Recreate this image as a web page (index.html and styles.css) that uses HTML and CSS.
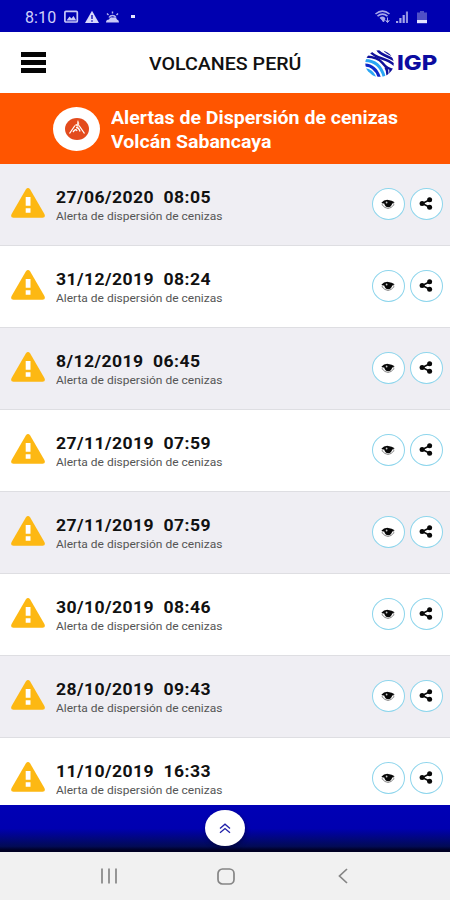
FILE: index.html
```html
<!DOCTYPE html>
<html lang="es">
<head>
<meta charset="utf-8">
<title>Volcanes Perú</title>
<link rel="stylesheet" href="styles.css">
</head>
<body>
<svg class="defs" width="0" height="0">
  <symbol id="warn" viewBox="0 0 34 30"><path d="M14.8 1.4Q17-1.2 19.2 1.4L33.4 26Q35 29.6 31.5 29.8H2.500Q-1 29.6.6 26Z" fill="#fdb813"/><path d="M14.700 9h4.800v8.800h-4.800zM14.700 20.200h4.800v4.600h-4.800z" fill="#fff"/></symbol>
  <symbol id="eye" viewBox="0 0 14 12"><path d="M.8 6.500Q7-.8 13.200 6.500Q7 14.400.8 6.500Z" fill="#fff" stroke="#777" stroke-width=".9"/><path d="M.3 4.800Q3 1.600 7 1.900T13.700 4.300L11.200 5.500Q10.400 9.200 7.200 9.200T3.200 5.500Z" fill="#080808"/><circle cx="5.600" cy="4.500" r=".9" fill="#ccc"/></symbol>
  <symbol id="share" viewBox="0 0 14 14"><path d="M11 3L3 7l8 4" fill="none" stroke="#080808" stroke-width="1.700"/><g fill="#080808"><circle cx="10.900" cy="2.900" r="2.700"/><circle cx="2.800" cy="7" r="2.700"/><circle cx="10.900" cy="11.100" r="2.700"/></g></symbol>
</svg>
<div class="status">
  <span class="clock">8:10</span>
  <svg class="left-icons" width="74" height="14" viewBox="0 0 74 14"><rect x=".9" y="1.400" width="12.400" height="10.600" rx="1" fill="none" stroke="#c9c9f7" stroke-width="1.700"/><path d="M2.500 10.500l3-4 2 2 2-2.400 2.800 4.400z" fill="#c9c9f7"/><path d="M28 .8L35 13H21z" fill="#d8d8fb"/><path d="M28 5v4M28 10.200v1.500" stroke="#0000b0" stroke-width="1.300"/><path d="M42 12.500q0-3 3-3 1-3 4-2 3-1.200 4 2 2 .5 2 3z" fill="#c9c9f7"/><path d="M45 7.500a4 4 0 0 1 7 0M48.500 3.500V1.500M44.500 5L43 3.500M52.500 5L54 3.500" fill="none" stroke="#b7b7f0" stroke-width="1.400"/><rect x="67" y="5" width="4" height="3" fill="#e4e4ff"/></svg>
  <svg class="right-icons" width="56" height="16" viewBox="0 0 56 16"><g fill="none" stroke="#a6a6ea" stroke-width="1.600"><path d="M1.500 5Q8.500-.8 15.500 5M3.500 7.200Q8.500 3 13.500 7.200M6 9.400Q8.500 7.500 10.500 9.400"/></g><path d="M7 9.500h4l-1.500 3.500zM13.500 8.500v5M11.500 11.500l2 2 2-2" fill="#a6a6ea" stroke="#a6a6ea"/><path d="M22 14h2.200v-2H22zM25.300 14h2.200V9h-2.200zM28.600 14h2.200V6h-2.200z" fill="#a6a6ea"/><path d="M31.900 14h2.100V2.500h-2.100z" fill="#8f8fe0"/><path d="M43 3.500h3v-1.500h4v1.500h3V11H43z" fill="#5050c6"/><path d="M43 11h10v3.200H43z" fill="#e3e3ff"/></svg>
</div>
<header class="bar">
  <div class="menu"><i></i><i></i><i></i></div>
  <h1><span>VOLCANES PERÚ</span></h1>
  <div class="logo">
    <svg width="29" height="27" viewBox="0 0 29 27"><defs><clipPath id="globe"><ellipse cx="14.500" cy="13.500" rx="14.200" ry="13.300"/></clipPath></defs><g clip-path="url(#globe)" fill="none"><g stroke="#10109a" stroke-width="2.500"><path d="M1 6.500Q13 7 17.500 13T29 20"/><path d="M5 1.500Q9 6 17 8.500T30 15.500"/><path d="M12-1Q14 3 20 5.500T31 11"/><path d="M19-1Q21 3 30 6"/><path d="M20.500 17q2.500 4 2 10M25.500 20v6"/></g><g stroke-width="3"><path d="M-1 10.500Q15 10 19.500 28" stroke="#2ba6f4"/><path d="M-1 15Q10.500 15 14.500 28" stroke="#0c25c8"/><path d="M-1 19.500Q7 20 10 28" stroke="#2ba6f4"/></g></g></svg>
    <span class="brand">IGP</span>
  </div>
</header>
<section class="alert">
  <div class="badge"><svg width="24" height="22" viewBox="0 0 24 22"><ellipse cx="12" cy="11" rx="12" ry="11" fill="#e34b1d"/><path d="M4.500 15.500L10 7.500M19.500 15.500L14 7.500M8 14q3-4 4-1M11 9.500q3 0 4 4" fill="none" stroke="#fff" stroke-width="1.300"/><path d="M10 7.500q0-2 2-1.500 0-3 1-4 1.800 3 1 5.500l-1 1.500-1.500-1z" fill="#ffe0d5"/></svg></div>
  <h2><span>Alertas de Dispersión de cenizas</span><br><span>Volcán Sabancaya</span></h2>
</section>
<main class="list">
  <article class="row"><svg class="warn"><use href="#warn"/></svg><div class="info"><p class="date">27/06/2020&nbsp; 08:05</p><p class="desc">Alerta de dispersión de cenizas</p></div><span class="btn"><svg class="eye"><use href="#eye"/></svg></span><span class="btn"><svg class="share"><use href="#share"/></svg></span></article>
  <article class="row"><svg class="warn"><use href="#warn"/></svg><div class="info"><p class="date">31/12/2019&nbsp; 08:24</p><p class="desc">Alerta de dispersión de cenizas</p></div><span class="btn"><svg class="eye"><use href="#eye"/></svg></span><span class="btn"><svg class="share"><use href="#share"/></svg></span></article>
  <article class="row"><svg class="warn"><use href="#warn"/></svg><div class="info"><p class="date">8/12/2019&nbsp; 06:45</p><p class="desc">Alerta de dispersión de cenizas</p></div><span class="btn"><svg class="eye"><use href="#eye"/></svg></span><span class="btn"><svg class="share"><use href="#share"/></svg></span></article>
  <article class="row"><svg class="warn"><use href="#warn"/></svg><div class="info"><p class="date">27/11/2019&nbsp; 07:59</p><p class="desc">Alerta de dispersión de cenizas</p></div><span class="btn"><svg class="eye"><use href="#eye"/></svg></span><span class="btn"><svg class="share"><use href="#share"/></svg></span></article>
  <article class="row"><svg class="warn"><use href="#warn"/></svg><div class="info"><p class="date">27/11/2019&nbsp; 07:59</p><p class="desc">Alerta de dispersión de cenizas</p></div><span class="btn"><svg class="eye"><use href="#eye"/></svg></span><span class="btn"><svg class="share"><use href="#share"/></svg></span></article>
  <article class="row"><svg class="warn"><use href="#warn"/></svg><div class="info"><p class="date">30/10/2019&nbsp; 08:46</p><p class="desc">Alerta de dispersión de cenizas</p></div><span class="btn"><svg class="eye"><use href="#eye"/></svg></span><span class="btn"><svg class="share"><use href="#share"/></svg></span></article>
  <article class="row"><svg class="warn"><use href="#warn"/></svg><div class="info"><p class="date">28/10/2019&nbsp; 09:43</p><p class="desc">Alerta de dispersión de cenizas</p></div><span class="btn"><svg class="eye"><use href="#eye"/></svg></span><span class="btn"><svg class="share"><use href="#share"/></svg></span></article>
  <article class="row"><svg class="warn"><use href="#warn"/></svg><div class="info"><p class="date">11/10/2019&nbsp; 16:33</p><p class="desc">Alerta de dispersión de cenizas</p></div><span class="btn"><svg class="eye"><use href="#eye"/></svg></span><span class="btn"><svg class="share"><use href="#share"/></svg></span></article>
</main>
<div class="dock"><div class="up"><svg width="12" height="11" viewBox="0 0 12 11"><path d="M1 5.500L6 1.200l5 4.300M1 9.800L6 5.500l5 4.300" fill="none" stroke="#2020a8" stroke-width="1.300"/></svg></div></div>
<nav class="nav">
  <svg width="18" height="16" viewBox="0 0 18 16"><path d="M2 .5v15M9 .5v15M16 .5v15" stroke="#8c8c8c" stroke-width="1.800"/></svg>
  <svg width="18" height="17" viewBox="0 0 18 17"><rect x="1" y="1" width="16" height="15" rx="4.500" fill="none" stroke="#858585" stroke-width="1.700"/></svg>
  <svg width="10" height="16" viewBox="0 0 10 16"><path d="M9 1L1.500 8 9 15" fill="none" stroke="#858585" stroke-width="1.700"/></svg>
</nav>
</body>
</html>
```
FILE: styles.css
```css
* { box-sizing: border-box; }
body { margin: 0; width: 450px; height: 900px; overflow: hidden; display: flex; flex-direction: column; font-family: Roboto, sans-serif; background: #fff; }
h1, h2, p { margin: 0; }
svg { display: block; flex: none; }
.defs { display: none; }
.status { flex: none; height: 32px; background: #0000b0; display: flex; align-items: center; padding: 2px 20px 0 25px; color: #d0d0fa; }
.clock { font-size: 16px; width: 39px; letter-spacing: .1px; }
.right-icons { margin-left: auto; }
.bar { flex: none; height: 61px; display: flex; align-items: center; padding: 0 13px 0 21px; }
.menu { width: 25px; display: flex; flex-direction: column; gap: 3px; }
.menu i { height: 5px; background: #050505; }
.bar h1 { margin-left: 103px; padding-top: 2px; font-size: 18px; font-weight: 500; color: #111; white-space: nowrap; width: 216px; line-height: 24px; }
.bar h1 span { display: inline-block; transform-origin: left; transform: scaleX(1.09); }
.logo { display: flex; align-items: center; gap: 3px; margin-top: 1px; }
.brand { font: 800 20.5px/26px Inter, sans-serif; color: #0c0ca0; transform-origin: left; transform: scaleX(1.16); }
.alert { flex: none; height: 71px; background: #ff5500; display: flex; align-items: center; padding-left: 53px; gap: 11px; }
.badge { width: 47px; height: 44px; border-radius: 50%; background: #fff; display: grid; place-items: center; flex: none; }
.alert h2 { padding-top: 2px; font-size: 18px; line-height: 24px; font-weight: 700; color: #fff; white-space: nowrap; }
.alert h2 span { display: inline-block; transform-origin: left; transform: scaleX(1.085); }
.list { flex: none; height: 641px; overflow: hidden; }
.row { height: 82px; background: #fff; border-bottom: 1px solid #dedee2; display: flex; align-items: center; padding: 0 7px 1px 11px; }
.row:nth-child(odd) { background: #efeef3; }
.warn { width: 34px; height: 30px; margin-bottom: 2px; }
.info { width: 316px; padding-left: 11px; padding-top: 4px; margin-right: auto; white-space: nowrap; }
.date { font-size: 16.5px; line-height: 20px; font-weight: 700; color: #111; letter-spacing: .4px; transform-origin: left; transform: scaleX(1.065); }
.desc { font-size: 11.5px; line-height: 17px; color: #555; transform-origin: left; transform: scaleX(1.042); }
.btn { width: 33px; height: 32px; border: 1.5px solid #8dd5ec; border-radius: 50%; background: #fff; display: grid; place-items: center; margin-left: 5px; flex: none; }
.eye { width: 14px; height: 12px; margin-right: 2px; }
.share { width: 14px; height: 13px; margin: 0 2px 1px 0; }
.dock { flex: none; height: 47px; background: linear-gradient(#0000b5 0, #0000b0 50%, #020b55 88%, #000025 96%); display: flex; justify-content: center; padding-top: 5px; }
.up { width: 40px; height: 36px; border-radius: 50%; background: #fff; display: grid; place-items: center; box-shadow: 1px 2px 4px #00003080; }
.nav { flex: 1; background: #f1f1f1; display: flex; align-items: center; padding-left: 100px; }
.nav svg:nth-child(2) { margin-left: 99px; }
.nav svg:nth-child(3) { margin-left: 103px; }
```
